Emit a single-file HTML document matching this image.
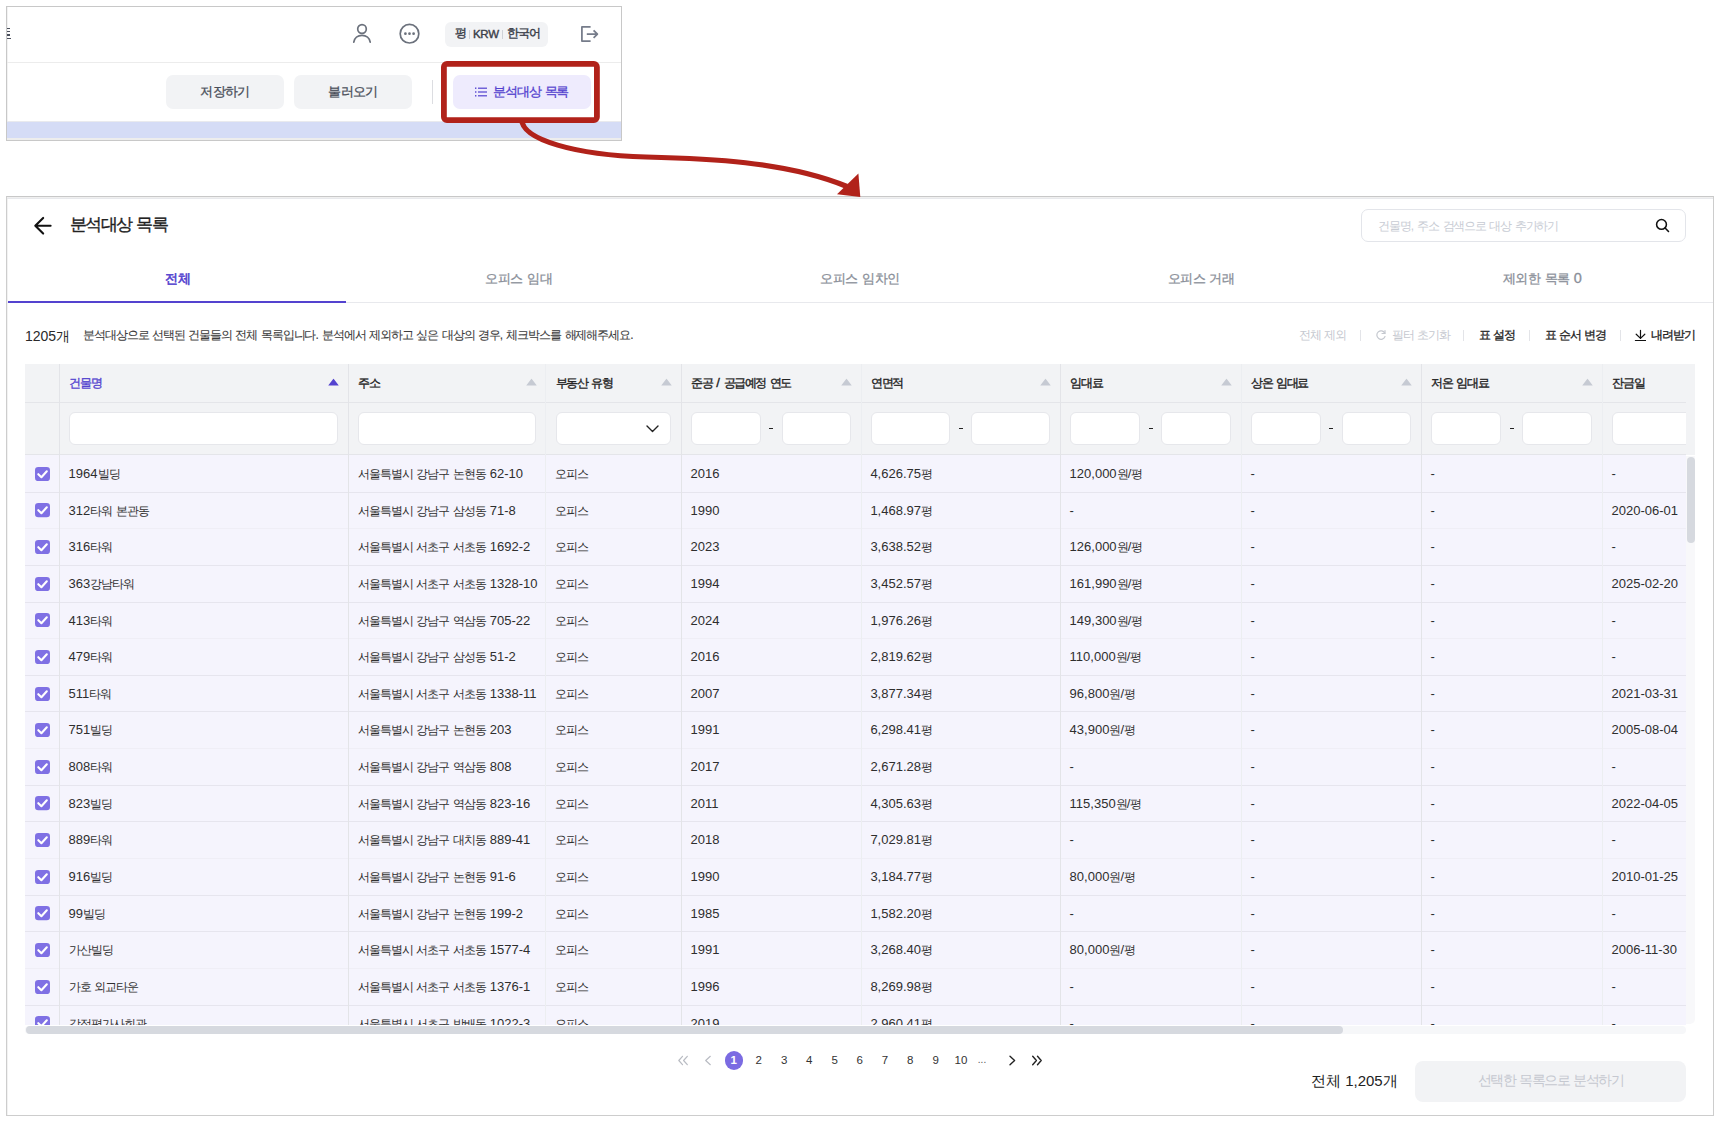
<!DOCTYPE html>
<html><head><meta charset="utf-8"><style>
*{box-sizing:border-box;margin:0;padding:0}
html,body{width:1720px;height:1124px;overflow:hidden;background:#fff}
body{position:relative;font-family:"Liberation Sans",sans-serif;color:#2a2a2a}
.abs{position:absolute}
.t{position:absolute;white-space:nowrap;line-height:1}
</style></head><body>

<div class="abs" style="left:6px;top:6px;width:616px;height:135px;border:1px solid #c8c8c8;background:#fff;overflow:hidden;box-shadow:inset 1px 0 0 #f2f2f2">
<div class="abs" style="left:0.00px;top:55.00px;width:614.00px;height:1.00px;background:#ececec;"></div>
<div class="abs" style="left:0.00px;top:21.00px;width:3.00px;height:1.40px;background:#4a4f5c;"></div>
<div class="abs" style="left:0.00px;top:24.00px;width:2.50px;height:1.20px;background:#4a4f5c;"></div>
<div class="abs" style="left:0.00px;top:27.00px;width:3.00px;height:1.80px;background:#4a4f5c;"></div>
<div class="abs" style="left:0.00px;top:31.00px;width:4.00px;height:1.40px;background:#4a4f5c;"></div>
<div class="abs" style="left:0.00px;top:114.00px;width:614.00px;height:1.00px;background:#e9eaee;"></div>
<div class="abs" style="left:0.00px;top:115.00px;width:614.00px;height:16.00px;background:#d5dcf6;"></div>
<div class="abs" style="left:0.00px;top:131.00px;width:614.00px;height:2.00px;background:#ededed;"></div>
</div>
<svg class="abs" style="left:350px;top:21px" width="24" height="24" viewBox="0 0 24 24" fill="none" stroke="#6b717c" stroke-width="1.7" stroke-linecap="round">
<circle cx="12" cy="8" r="4.3"/><path d="M3.8 21.2c0.6-4.2 4-6.8 8.2-6.8s7.6 2.6 8.2 6.8"/></svg>
<svg class="abs" style="left:397px;top:21px" width="25" height="25" viewBox="0 0 25 25" fill="none" stroke="#6b717c" stroke-width="1.7">
<circle cx="12.5" cy="12.7" r="9.3"/><circle cx="8.4" cy="12.7" r="1.35" fill="#6b717c" stroke="none"/><circle cx="12.5" cy="12.7" r="1.35" fill="#6b717c" stroke="none"/><circle cx="16.6" cy="12.7" r="1.35" fill="#6b717c" stroke="none"/></svg>
<div class="abs" style="left:445.00px;top:22.00px;width:103.00px;height:25.00px;background:#f2f3f5;border-radius:6px"></div>
<div class="t" style="left:454.50px;top:28.00px;font-size:11.5px;-webkit-text-stroke:0.4px #3b404a;color:#3b404a;"><span style="letter-spacing:-0.9px">평</span></div>
<div class="abs" style="left:469.00px;top:30.00px;width:1.00px;height:9.00px;background:#cfd2d8;"></div>
<div class="t" style="left:473.00px;top:28.50px;font-size:11.5px;-webkit-text-stroke:0.4px #3b404a;color:#3b404a;letter-spacing:-0.3px">KRW</div>
<div class="abs" style="left:502.00px;top:30.00px;width:1.00px;height:9.00px;background:#cfd2d8;"></div>
<div class="t" style="left:506.50px;top:28.00px;font-size:11.5px;-webkit-text-stroke:0.4px #3b404a;color:#3b404a;"><span style="letter-spacing:-0.9px">한국어</span></div>
<svg class="abs" style="left:578px;top:23px" width="24" height="22" viewBox="0 0 24 22" fill="none" stroke="#767c8a" stroke-width="1.75" stroke-linejoin="round">
<path d="M12.6 3.9H3.9V18.1H12.6"/><path d="M8.8 11.1H19.4M15.6 7.3l3.8 3.8-3.8 3.8"/></svg>
<div class="abs" style="left:166.00px;top:75.00px;width:118.00px;height:34.00px;background:#f2f3f5;border-radius:7px"></div>
<div class="t" style="left:166.00px;top:84.00px;font-size:14px;-webkit-text-stroke:0.3px #4a4f5a;color:#4a4f5a;width:118px;text-align:center"><span style="font-size:93.0%;letter-spacing:-0.7px">저장하기</span></div>
<div class="abs" style="left:294.00px;top:75.00px;width:118.00px;height:34.00px;background:#f2f3f5;border-radius:7px"></div>
<div class="t" style="left:294.00px;top:84.00px;font-size:14px;-webkit-text-stroke:0.3px #4a4f5a;color:#4a4f5a;width:118px;text-align:center"><span style="font-size:93.0%;letter-spacing:-0.7px">불러오기</span></div>
<div class="abs" style="left:432.00px;top:80.00px;width:1.00px;height:24.00px;background:#dcdde1;"></div>
<div class="abs" style="left:453.00px;top:75.00px;width:138.00px;height:34.00px;background:#eeebfd;border-radius:7px"></div>
<svg class="abs" style="left:474px;top:86px" width="14" height="12" viewBox="0 0 14 12" fill="#5443cf">
<rect x="1" y="1.5" width="1.4" height="1.4"/><rect x="1" y="5.3" width="1.4" height="1.4"/><rect x="1" y="9.1" width="1.4" height="1.4"/>
<rect x="4" y="1.6" width="9" height="1.2"/><rect x="4" y="5.4" width="9" height="1.2"/><rect x="4" y="9.2" width="9" height="1.2"/></svg>
<div class="t" style="left:493.00px;top:83.50px;font-size:14px;-webkit-text-stroke:0.3px #5443cf;color:#5443cf;"><span style="font-size:93.0%;letter-spacing:-1.1px">분석대상</span> <span style="font-size:93.0%;letter-spacing:-1.1px">목록</span></div>
<div class="abs" style="left:6px;top:196px;width:1708px;height:920px;border:1px solid #cdcdcd;border-top-color:#c8c8c8;box-shadow:inset 0 1px 0 #f0f0f0, inset 0 2px 0 #e8e9ec, inset 1px 0 0 #f2f2f2"></div>
<svg class="abs" style="left:32px;top:214px" width="22" height="22" viewBox="0 0 22 22" fill="none" stroke="#111" stroke-width="2.1" stroke-linecap="round" stroke-linejoin="round">
<path d="M4 11.75H18.6M11.15 3.9L3.3 11.75 11.15 19.6"/></svg>
<div class="t" style="left:70.00px;top:215.00px;font-size:18px;-webkit-text-stroke:0.35px #222;color:#222;"><span style="font-size:96.0%;letter-spacing:-1.7px">분석대상</span> <span style="font-size:96.0%;letter-spacing:-1.7px">목록</span></div>
<div class="abs" style="left:1361.00px;top:209.00px;width:325.00px;height:33.00px;background:#fff;border-radius:7px;border:1px solid #e3e5ea"></div>
<div class="t" style="left:1378.00px;top:219.50px;font-size:12px;color:#c8ccd4;"><span style="letter-spacing:-1.1px">건물명</span>, <span style="letter-spacing:-1.1px">주소</span> <span style="letter-spacing:-1.1px">검색으로</span> <span style="letter-spacing:-1.1px">대상</span> <span style="letter-spacing:-1.1px">추가하기</span></div>
<svg class="abs" style="left:1653px;top:217px" width="18" height="18" viewBox="0 0 18 18" fill="none" stroke="#111" stroke-width="1.55" stroke-linecap="round">
<circle cx="8.5" cy="7.4" r="4.9"/><path d="M12.1 11l3.4 3.5"/></svg>
<div class="t" style="left:7.00px;top:270.50px;font-size:14.5px;-webkit-text-stroke:0.6px #5443cf;color:#5443cf;width:341.20px;text-align:center"><span style="font-size:93.0%;letter-spacing:-0.45px">전체</span></div>
<div class="t" style="left:348.20px;top:270.50px;font-size:14.5px;-webkit-text-stroke:0.3px #8a8f99;color:#8a8f99;width:341.20px;text-align:center"><span style="font-size:93.0%;letter-spacing:-0.45px">오피스</span> <span style="font-size:93.0%;letter-spacing:-0.45px">임대</span></div>
<div class="t" style="left:689.40px;top:270.50px;font-size:14.5px;-webkit-text-stroke:0.3px #8a8f99;color:#8a8f99;width:341.20px;text-align:center"><span style="font-size:93.0%;letter-spacing:-0.45px">오피스</span> <span style="font-size:93.0%;letter-spacing:-0.45px">임차인</span></div>
<div class="t" style="left:1030.60px;top:270.50px;font-size:14.5px;-webkit-text-stroke:0.3px #8a8f99;color:#8a8f99;width:341.20px;text-align:center"><span style="font-size:93.0%;letter-spacing:-0.45px">오피스</span> <span style="font-size:93.0%;letter-spacing:-0.45px">거래</span></div>
<div class="t" style="left:1371.80px;top:270.50px;font-size:14.5px;-webkit-text-stroke:0.3px #8a8f99;color:#8a8f99;width:341.20px;text-align:center"><span style="font-size:93.0%;letter-spacing:-0.45px">제외한</span> <span style="font-size:93.0%;letter-spacing:-0.45px">목록</span> 0</div>
<div class="abs" style="left:7.00px;top:302.00px;width:1706.00px;height:1.00px;background:#e8e9ed;"></div>
<div class="abs" style="left:7.50px;top:301.00px;width:338.50px;height:2.00px;background:#5443cf;"></div>
<div class="t" style="left:25.00px;top:329.00px;font-size:14px;color:#2a2a2a;">1205개</div>
<div class="t" style="left:83.00px;top:329.30px;font-size:12px;-webkit-text-stroke:0.1px #3c3c3c;color:#3c3c3c;"><span style="letter-spacing:-1.05px">분석대상으로</span> <span style="letter-spacing:-1.05px">선택된</span> <span style="letter-spacing:-1.05px">건물들의</span> <span style="letter-spacing:-1.05px">전체</span> <span style="letter-spacing:-1.05px">목록입니다</span>. <span style="letter-spacing:-1.05px">분석에서</span> <span style="letter-spacing:-1.05px">제외하고</span> <span style="letter-spacing:-1.05px">싶은</span> <span style="letter-spacing:-1.05px">대상의</span> <span style="letter-spacing:-1.05px">경우</span>, <span style="letter-spacing:-1.05px">체크박스를</span> <span style="letter-spacing:-1.05px">해제해주세요</span>.</div>
<div class="t" style="left:1299.00px;top:329.00px;font-size:12px;color:#c5c8cf;"><span style="letter-spacing:-1.1px">전체</span> <span style="letter-spacing:-1.1px">제외</span></div>
<div class="abs" style="left:1360.00px;top:330.00px;width:1.00px;height:11.00px;background:#e3e4e8;"></div>
<svg class="abs" style="left:1375px;top:329px" width="12" height="12" viewBox="0 0 12 12" fill="none" stroke="#c5c8cf" stroke-width="1.2" stroke-linecap="round">
<path d="M9.8 4.2A4.2 4.2 0 1 0 10 7.5"/><path d="M10 1.5v3h-3" /></svg>
<div class="t" style="left:1392.00px;top:329.00px;font-size:12px;color:#c5c8cf;"><span style="letter-spacing:-1.1px">필터</span> <span style="letter-spacing:-1.1px">초기화</span></div>
<div class="abs" style="left:1463.00px;top:330.00px;width:1.00px;height:11.00px;background:#e3e4e8;"></div>
<div class="t" style="left:1479.00px;top:329.00px;font-size:12px;-webkit-text-stroke:0.3px #222;color:#222;"><span style="letter-spacing:-1.1px">표</span> <span style="letter-spacing:-1.1px">설정</span></div>
<div class="abs" style="left:1529.00px;top:330.00px;width:1.00px;height:11.00px;background:#e3e4e8;"></div>
<div class="t" style="left:1545.00px;top:329.00px;font-size:12px;-webkit-text-stroke:0.3px #222;color:#222;"><span style="letter-spacing:-1.1px">표</span> <span style="letter-spacing:-1.1px">순서</span> <span style="letter-spacing:-1.1px">변경</span></div>
<div class="abs" style="left:1620.00px;top:330.00px;width:1.00px;height:11.00px;background:#e3e4e8;"></div>
<svg class="abs" style="left:1634px;top:329px" width="12" height="13" viewBox="0 0 12 13" fill="none" stroke="#111" stroke-width="1.2" stroke-linecap="round" stroke-linejoin="round">
<path d="M6.5 1.3v8.2M2.2 5.2L6.5 9.4l4.3-4.2M1.4 11.5h10.2"/></svg>
<div class="t" style="left:1651.00px;top:329.00px;font-size:12px;-webkit-text-stroke:0.3px #222;color:#222;"><span style="letter-spacing:-1.1px">내려받기</span></div>
<div class="abs" style="left:25.00px;top:364.00px;width:1670.00px;height:90.50px;background:#f2f3f5;"></div>
<div class="abs" style="left:25px;top:364.0px;width:1661.0px;height:661.0px;overflow:hidden">
<div class="abs" style="left:0.00px;top:90.50px;width:1800.00px;height:700.00px;background:#f5f4fd;"></div>
<div class="abs" style="left:0.00px;top:37.90px;width:1800.00px;height:1.00px;background:#e4e5e9;"></div>
<div class="abs" style="left:0.00px;top:90.00px;width:1800.00px;height:1.00px;background:#e4e5e9;"></div>
<div class="abs" style="left:0.00px;top:127.64px;width:1800.00px;height:1.00px;background:#e6e5ee;"></div>
<div class="abs" style="left:0.00px;top:164.28px;width:1800.00px;height:1.00px;background:#efeef6;"></div>
<div class="abs" style="left:0.00px;top:200.92px;width:1800.00px;height:1.00px;background:#e6e5ee;"></div>
<div class="abs" style="left:0.00px;top:237.56px;width:1800.00px;height:1.00px;background:#e6e5ee;"></div>
<div class="abs" style="left:0.00px;top:274.20px;width:1800.00px;height:1.00px;background:#efeef6;"></div>
<div class="abs" style="left:0.00px;top:310.84px;width:1800.00px;height:1.00px;background:#e6e5ee;"></div>
<div class="abs" style="left:0.00px;top:347.48px;width:1800.00px;height:1.00px;background:#e6e5ee;"></div>
<div class="abs" style="left:0.00px;top:384.12px;width:1800.00px;height:1.00px;background:#efeef6;"></div>
<div class="abs" style="left:0.00px;top:420.76px;width:1800.00px;height:1.00px;background:#e6e5ee;"></div>
<div class="abs" style="left:0.00px;top:457.40px;width:1800.00px;height:1.00px;background:#e6e5ee;"></div>
<div class="abs" style="left:0.00px;top:494.04px;width:1800.00px;height:1.00px;background:#efeef6;"></div>
<div class="abs" style="left:0.00px;top:530.68px;width:1800.00px;height:1.00px;background:#e6e5ee;"></div>
<div class="abs" style="left:0.00px;top:567.32px;width:1800.00px;height:1.00px;background:#e6e5ee;"></div>
<div class="abs" style="left:0.00px;top:603.96px;width:1800.00px;height:1.00px;background:#efeef6;"></div>
<div class="abs" style="left:0.00px;top:640.60px;width:1800.00px;height:1.00px;background:#e6e5ee;"></div>
<div class="abs" style="left:0.00px;top:677.24px;width:1800.00px;height:1.00px;background:#e6e5ee;"></div>
<div class="abs" style="left:33.90px;top:0.00px;width:1.00px;height:700.00px;background:#e3e4e8;"></div>
<div class="abs" style="left:322.80px;top:0.00px;width:1.00px;height:700.00px;background:#e3e4e8;"></div>
<div class="abs" style="left:520.30px;top:0.00px;width:1.00px;height:700.00px;background:#eceef1;"></div>
<div class="abs" style="left:655.90px;top:0.00px;width:1.00px;height:700.00px;background:#e3e4e8;"></div>
<div class="abs" style="left:835.70px;top:0.00px;width:1.00px;height:700.00px;background:#eceef1;"></div>
<div class="abs" style="left:1034.90px;top:0.00px;width:1.00px;height:700.00px;background:#e3e4e8;"></div>
<div class="abs" style="left:1215.70px;top:0.00px;width:1.00px;height:700.00px;background:#eceef1;"></div>
<div class="abs" style="left:1395.90px;top:0.00px;width:1.00px;height:700.00px;background:#e3e4e8;"></div>
<div class="abs" style="left:1576.80px;top:0.00px;width:1.00px;height:700.00px;background:#eceef1;"></div>
<div class="t" style="left:44.40px;top:12.00px;font-size:13px;-webkit-text-stroke:0.35px #5443cf;color:#5443cf;"><span style="font-size:92.0%;letter-spacing:-1.36px">건물명</span></div>
<svg class="abs" style="left:303.30px;top:14px" width="11" height="8" viewBox="0 0 11 8"><path d="M5.5 0.8Q5.5 0.5 5.8 0.9L10.6 7.2Q10.8 7.5 10.4 7.5H0.6Q0.2 7.5 0.4 7.2L5.2 0.9Q5.5 0.5 5.5 0.8z" fill="#5443cf"/></svg>
<div class="abs" style="left:44.40px;top:48.40px;width:268.90px;height:32.50px;background:#fff;border-radius:6px;border:1px solid #e6e7eb"></div>
<div class="t" style="left:333.30px;top:12.00px;font-size:13px;-webkit-text-stroke:0.35px #222;color:#222;"><span style="font-size:92.0%;letter-spacing:-1.36px">주소</span></div>
<svg class="abs" style="left:500.80px;top:14px" width="11" height="8" viewBox="0 0 11 8"><path d="M5.5 0.8Q5.5 0.5 5.8 0.9L10.6 7.2Q10.8 7.5 10.4 7.5H0.6Q0.2 7.5 0.4 7.2L5.2 0.9Q5.5 0.5 5.5 0.8z" fill="#c6cad3"/></svg>
<div class="abs" style="left:333.30px;top:48.40px;width:177.50px;height:32.50px;background:#fff;border-radius:6px;border:1px solid #e6e7eb"></div>
<div class="t" style="left:530.80px;top:12.00px;font-size:13px;-webkit-text-stroke:0.35px #222;color:#222;"><span style="font-size:92.0%;letter-spacing:-1.36px">부동산</span> <span style="font-size:92.0%;letter-spacing:-1.36px">유형</span></div>
<svg class="abs" style="left:636.40px;top:14px" width="11" height="8" viewBox="0 0 11 8"><path d="M5.5 0.8Q5.5 0.5 5.8 0.9L10.6 7.2Q10.8 7.5 10.4 7.5H0.6Q0.2 7.5 0.4 7.2L5.2 0.9Q5.5 0.5 5.5 0.8z" fill="#c6cad3"/></svg>
<div class="abs" style="left:530.80px;top:48.40px;width:115.60px;height:32.50px;background:#fff;border-radius:6px;border:1px solid #e6e7eb"></div>
<svg class="abs" style="left:620.90px;top:61.40px" width="13" height="8" viewBox="0 0 13 8" fill="none" stroke="#222" stroke-width="1.4" stroke-linecap="round" stroke-linejoin="round"><path d="M1 1l5.5 5.5L12 1"/></svg>
<div class="t" style="left:666.40px;top:12.00px;font-size:13px;-webkit-text-stroke:0.35px #222;color:#222;"><span style="font-size:92.0%;letter-spacing:-1.36px">준공</span> / <span style="font-size:92.0%;letter-spacing:-1.36px">공급예정</span> <span style="font-size:92.0%;letter-spacing:-1.36px">연도</span></div>
<svg class="abs" style="left:816.20px;top:14px" width="11" height="8" viewBox="0 0 11 8"><path d="M5.5 0.8Q5.5 0.5 5.8 0.9L10.6 7.2Q10.8 7.5 10.4 7.5H0.6Q0.2 7.5 0.4 7.2L5.2 0.9Q5.5 0.5 5.5 0.8z" fill="#c6cad3"/></svg>
<div class="abs" style="left:666.40px;top:48.40px;width:69.40px;height:32.50px;background:#fff;border-radius:6px;border:1px solid #e6e7eb"></div>
<div class="abs" style="left:744.30px;top:63.90px;width:4.00px;height:1.60px;background:#222;"></div>
<div class="abs" style="left:756.80px;top:48.40px;width:69.40px;height:32.50px;background:#fff;border-radius:6px;border:1px solid #e6e7eb"></div>
<div class="t" style="left:846.20px;top:12.00px;font-size:13px;-webkit-text-stroke:0.35px #222;color:#222;"><span style="font-size:92.0%;letter-spacing:-1.36px">연면적</span></div>
<svg class="abs" style="left:1015.40px;top:14px" width="11" height="8" viewBox="0 0 11 8"><path d="M5.5 0.8Q5.5 0.5 5.8 0.9L10.6 7.2Q10.8 7.5 10.4 7.5H0.6Q0.2 7.5 0.4 7.2L5.2 0.9Q5.5 0.5 5.5 0.8z" fill="#c6cad3"/></svg>
<div class="abs" style="left:846.20px;top:48.40px;width:79.10px;height:32.50px;background:#fff;border-radius:6px;border:1px solid #e6e7eb"></div>
<div class="abs" style="left:933.80px;top:63.90px;width:4.00px;height:1.60px;background:#222;"></div>
<div class="abs" style="left:946.30px;top:48.40px;width:79.10px;height:32.50px;background:#fff;border-radius:6px;border:1px solid #e6e7eb"></div>
<div class="t" style="left:1045.40px;top:12.00px;font-size:13px;-webkit-text-stroke:0.35px #222;color:#222;"><span style="font-size:92.0%;letter-spacing:-1.36px">임대료</span></div>
<svg class="abs" style="left:1196.20px;top:14px" width="11" height="8" viewBox="0 0 11 8"><path d="M5.5 0.8Q5.5 0.5 5.8 0.9L10.6 7.2Q10.8 7.5 10.4 7.5H0.6Q0.2 7.5 0.4 7.2L5.2 0.9Q5.5 0.5 5.5 0.8z" fill="#c6cad3"/></svg>
<div class="abs" style="left:1045.40px;top:48.40px;width:69.90px;height:32.50px;background:#fff;border-radius:6px;border:1px solid #e6e7eb"></div>
<div class="abs" style="left:1123.80px;top:63.90px;width:4.00px;height:1.60px;background:#222;"></div>
<div class="abs" style="left:1136.30px;top:48.40px;width:69.90px;height:32.50px;background:#fff;border-radius:6px;border:1px solid #e6e7eb"></div>
<div class="t" style="left:1226.20px;top:12.00px;font-size:13px;-webkit-text-stroke:0.35px #222;color:#222;"><span style="font-size:92.0%;letter-spacing:-1.36px">상온</span> <span style="font-size:92.0%;letter-spacing:-1.36px">임대료</span></div>
<svg class="abs" style="left:1376.40px;top:14px" width="11" height="8" viewBox="0 0 11 8"><path d="M5.5 0.8Q5.5 0.5 5.8 0.9L10.6 7.2Q10.8 7.5 10.4 7.5H0.6Q0.2 7.5 0.4 7.2L5.2 0.9Q5.5 0.5 5.5 0.8z" fill="#c6cad3"/></svg>
<div class="abs" style="left:1226.20px;top:48.40px;width:69.60px;height:32.50px;background:#fff;border-radius:6px;border:1px solid #e6e7eb"></div>
<div class="abs" style="left:1304.30px;top:63.90px;width:4.00px;height:1.60px;background:#222;"></div>
<div class="abs" style="left:1316.80px;top:48.40px;width:69.60px;height:32.50px;background:#fff;border-radius:6px;border:1px solid #e6e7eb"></div>
<div class="t" style="left:1406.40px;top:12.00px;font-size:13px;-webkit-text-stroke:0.35px #222;color:#222;"><span style="font-size:92.0%;letter-spacing:-1.36px">저온</span> <span style="font-size:92.0%;letter-spacing:-1.36px">임대료</span></div>
<svg class="abs" style="left:1557.30px;top:14px" width="11" height="8" viewBox="0 0 11 8"><path d="M5.5 0.8Q5.5 0.5 5.8 0.9L10.6 7.2Q10.8 7.5 10.4 7.5H0.6Q0.2 7.5 0.4 7.2L5.2 0.9Q5.5 0.5 5.5 0.8z" fill="#c6cad3"/></svg>
<div class="abs" style="left:1406.40px;top:48.40px;width:69.95px;height:32.50px;background:#fff;border-radius:6px;border:1px solid #e6e7eb"></div>
<div class="abs" style="left:1484.85px;top:63.90px;width:4.00px;height:1.60px;background:#222;"></div>
<div class="abs" style="left:1497.35px;top:48.40px;width:69.95px;height:32.50px;background:#fff;border-radius:6px;border:1px solid #e6e7eb"></div>
<div class="t" style="left:1587.30px;top:12.00px;font-size:13px;-webkit-text-stroke:0.35px #222;color:#222;"><span style="font-size:92.0%;letter-spacing:-1.36px">잔금일</span></div>
<div class="abs" style="left:1587.30px;top:48.40px;width:200.00px;height:32.50px;background:#fff;border-radius:6px;border:1px solid #e6e7eb"></div>
<svg class="abs" style="left:10px;top:102.70px" width="15" height="14.2" viewBox="0 0 15 14.2"><rect width="15" height="14.2" rx="3.3" fill="#7f70e4"/><path d="M3.3 7.2l3.1 3 5.4-5.9" fill="none" stroke="#fff" stroke-width="2.1" stroke-linecap="round" stroke-linejoin="round"/></svg>
<div class="t" style="left:43.60px;top:103.00px;font-size:13px;color:#2e2e2e;">1964<span style="font-size:92.0%;letter-spacing:-0.96px">빌딩</span></div>
<div class="t" style="left:332.50px;top:103.00px;font-size:13px;color:#2e2e2e;"><span style="font-size:92.0%;letter-spacing:-0.96px">서울특별시</span> <span style="font-size:92.0%;letter-spacing:-0.96px">강남구</span> <span style="font-size:92.0%;letter-spacing:-0.96px">논현동</span> 62-10</div>
<div class="t" style="left:530.00px;top:103.00px;font-size:13px;color:#2e2e2e;"><span style="font-size:92.0%;letter-spacing:-0.96px">오피스</span></div>
<div class="t" style="left:665.60px;top:103.00px;font-size:13px;color:#2e2e2e;">2016</div>
<div class="t" style="left:845.40px;top:103.00px;font-size:13px;color:#2e2e2e;">4,626.75<span style="font-size:92.0%;letter-spacing:-0.96px">평</span></div>
<div class="t" style="left:1044.60px;top:103.00px;font-size:13px;color:#2e2e2e;">120,000<span style="font-size:92.0%;letter-spacing:-0.96px">원</span>/<span style="font-size:92.0%;letter-spacing:-0.96px">평</span></div>
<div class="t" style="left:1225.40px;top:103.00px;font-size:13px;color:#2e2e2e;">-</div>
<div class="t" style="left:1405.60px;top:103.00px;font-size:13px;color:#2e2e2e;">-</div>
<div class="t" style="left:1586.50px;top:103.00px;font-size:13px;color:#2e2e2e;">-</div>
<svg class="abs" style="left:10px;top:139.34px" width="15" height="14.2" viewBox="0 0 15 14.2"><rect width="15" height="14.2" rx="3.3" fill="#7f70e4"/><path d="M3.3 7.2l3.1 3 5.4-5.9" fill="none" stroke="#fff" stroke-width="2.1" stroke-linecap="round" stroke-linejoin="round"/></svg>
<div class="t" style="left:43.60px;top:139.64px;font-size:13px;color:#2e2e2e;">312<span style="font-size:92.0%;letter-spacing:-0.96px">타워</span> <span style="font-size:92.0%;letter-spacing:-0.96px">본관동</span></div>
<div class="t" style="left:332.50px;top:139.64px;font-size:13px;color:#2e2e2e;"><span style="font-size:92.0%;letter-spacing:-0.96px">서울특별시</span> <span style="font-size:92.0%;letter-spacing:-0.96px">강남구</span> <span style="font-size:92.0%;letter-spacing:-0.96px">삼성동</span> 71-8</div>
<div class="t" style="left:530.00px;top:139.64px;font-size:13px;color:#2e2e2e;"><span style="font-size:92.0%;letter-spacing:-0.96px">오피스</span></div>
<div class="t" style="left:665.60px;top:139.64px;font-size:13px;color:#2e2e2e;">1990</div>
<div class="t" style="left:845.40px;top:139.64px;font-size:13px;color:#2e2e2e;">1,468.97<span style="font-size:92.0%;letter-spacing:-0.96px">평</span></div>
<div class="t" style="left:1044.60px;top:139.64px;font-size:13px;color:#2e2e2e;">-</div>
<div class="t" style="left:1225.40px;top:139.64px;font-size:13px;color:#2e2e2e;">-</div>
<div class="t" style="left:1405.60px;top:139.64px;font-size:13px;color:#2e2e2e;">-</div>
<div class="t" style="left:1586.50px;top:139.64px;font-size:13px;color:#2e2e2e;">2020-06-01</div>
<svg class="abs" style="left:10px;top:175.98px" width="15" height="14.2" viewBox="0 0 15 14.2"><rect width="15" height="14.2" rx="3.3" fill="#7f70e4"/><path d="M3.3 7.2l3.1 3 5.4-5.9" fill="none" stroke="#fff" stroke-width="2.1" stroke-linecap="round" stroke-linejoin="round"/></svg>
<div class="t" style="left:43.60px;top:176.28px;font-size:13px;color:#2e2e2e;">316<span style="font-size:92.0%;letter-spacing:-0.96px">타워</span></div>
<div class="t" style="left:332.50px;top:176.28px;font-size:13px;color:#2e2e2e;"><span style="font-size:92.0%;letter-spacing:-0.96px">서울특별시</span> <span style="font-size:92.0%;letter-spacing:-0.96px">서초구</span> <span style="font-size:92.0%;letter-spacing:-0.96px">서초동</span> 1692-2</div>
<div class="t" style="left:530.00px;top:176.28px;font-size:13px;color:#2e2e2e;"><span style="font-size:92.0%;letter-spacing:-0.96px">오피스</span></div>
<div class="t" style="left:665.60px;top:176.28px;font-size:13px;color:#2e2e2e;">2023</div>
<div class="t" style="left:845.40px;top:176.28px;font-size:13px;color:#2e2e2e;">3,638.52<span style="font-size:92.0%;letter-spacing:-0.96px">평</span></div>
<div class="t" style="left:1044.60px;top:176.28px;font-size:13px;color:#2e2e2e;">126,000<span style="font-size:92.0%;letter-spacing:-0.96px">원</span>/<span style="font-size:92.0%;letter-spacing:-0.96px">평</span></div>
<div class="t" style="left:1225.40px;top:176.28px;font-size:13px;color:#2e2e2e;">-</div>
<div class="t" style="left:1405.60px;top:176.28px;font-size:13px;color:#2e2e2e;">-</div>
<div class="t" style="left:1586.50px;top:176.28px;font-size:13px;color:#2e2e2e;">-</div>
<svg class="abs" style="left:10px;top:212.62px" width="15" height="14.2" viewBox="0 0 15 14.2"><rect width="15" height="14.2" rx="3.3" fill="#7f70e4"/><path d="M3.3 7.2l3.1 3 5.4-5.9" fill="none" stroke="#fff" stroke-width="2.1" stroke-linecap="round" stroke-linejoin="round"/></svg>
<div class="t" style="left:43.60px;top:212.92px;font-size:13px;color:#2e2e2e;">363<span style="font-size:92.0%;letter-spacing:-0.96px">강남타워</span></div>
<div class="t" style="left:332.50px;top:212.92px;font-size:13px;color:#2e2e2e;"><span style="font-size:92.0%;letter-spacing:-0.96px">서울특별시</span> <span style="font-size:92.0%;letter-spacing:-0.96px">서초구</span> <span style="font-size:92.0%;letter-spacing:-0.96px">서초동</span> 1328-10</div>
<div class="t" style="left:530.00px;top:212.92px;font-size:13px;color:#2e2e2e;"><span style="font-size:92.0%;letter-spacing:-0.96px">오피스</span></div>
<div class="t" style="left:665.60px;top:212.92px;font-size:13px;color:#2e2e2e;">1994</div>
<div class="t" style="left:845.40px;top:212.92px;font-size:13px;color:#2e2e2e;">3,452.57<span style="font-size:92.0%;letter-spacing:-0.96px">평</span></div>
<div class="t" style="left:1044.60px;top:212.92px;font-size:13px;color:#2e2e2e;">161,990<span style="font-size:92.0%;letter-spacing:-0.96px">원</span>/<span style="font-size:92.0%;letter-spacing:-0.96px">평</span></div>
<div class="t" style="left:1225.40px;top:212.92px;font-size:13px;color:#2e2e2e;">-</div>
<div class="t" style="left:1405.60px;top:212.92px;font-size:13px;color:#2e2e2e;">-</div>
<div class="t" style="left:1586.50px;top:212.92px;font-size:13px;color:#2e2e2e;">2025-02-20</div>
<svg class="abs" style="left:10px;top:249.26px" width="15" height="14.2" viewBox="0 0 15 14.2"><rect width="15" height="14.2" rx="3.3" fill="#7f70e4"/><path d="M3.3 7.2l3.1 3 5.4-5.9" fill="none" stroke="#fff" stroke-width="2.1" stroke-linecap="round" stroke-linejoin="round"/></svg>
<div class="t" style="left:43.60px;top:249.56px;font-size:13px;color:#2e2e2e;">413<span style="font-size:92.0%;letter-spacing:-0.96px">타워</span></div>
<div class="t" style="left:332.50px;top:249.56px;font-size:13px;color:#2e2e2e;"><span style="font-size:92.0%;letter-spacing:-0.96px">서울특별시</span> <span style="font-size:92.0%;letter-spacing:-0.96px">강남구</span> <span style="font-size:92.0%;letter-spacing:-0.96px">역삼동</span> 705-22</div>
<div class="t" style="left:530.00px;top:249.56px;font-size:13px;color:#2e2e2e;"><span style="font-size:92.0%;letter-spacing:-0.96px">오피스</span></div>
<div class="t" style="left:665.60px;top:249.56px;font-size:13px;color:#2e2e2e;">2024</div>
<div class="t" style="left:845.40px;top:249.56px;font-size:13px;color:#2e2e2e;">1,976.26<span style="font-size:92.0%;letter-spacing:-0.96px">평</span></div>
<div class="t" style="left:1044.60px;top:249.56px;font-size:13px;color:#2e2e2e;">149,300<span style="font-size:92.0%;letter-spacing:-0.96px">원</span>/<span style="font-size:92.0%;letter-spacing:-0.96px">평</span></div>
<div class="t" style="left:1225.40px;top:249.56px;font-size:13px;color:#2e2e2e;">-</div>
<div class="t" style="left:1405.60px;top:249.56px;font-size:13px;color:#2e2e2e;">-</div>
<div class="t" style="left:1586.50px;top:249.56px;font-size:13px;color:#2e2e2e;">-</div>
<svg class="abs" style="left:10px;top:285.90px" width="15" height="14.2" viewBox="0 0 15 14.2"><rect width="15" height="14.2" rx="3.3" fill="#7f70e4"/><path d="M3.3 7.2l3.1 3 5.4-5.9" fill="none" stroke="#fff" stroke-width="2.1" stroke-linecap="round" stroke-linejoin="round"/></svg>
<div class="t" style="left:43.60px;top:286.20px;font-size:13px;color:#2e2e2e;">479<span style="font-size:92.0%;letter-spacing:-0.96px">타워</span></div>
<div class="t" style="left:332.50px;top:286.20px;font-size:13px;color:#2e2e2e;"><span style="font-size:92.0%;letter-spacing:-0.96px">서울특별시</span> <span style="font-size:92.0%;letter-spacing:-0.96px">강남구</span> <span style="font-size:92.0%;letter-spacing:-0.96px">삼성동</span> 51-2</div>
<div class="t" style="left:530.00px;top:286.20px;font-size:13px;color:#2e2e2e;"><span style="font-size:92.0%;letter-spacing:-0.96px">오피스</span></div>
<div class="t" style="left:665.60px;top:286.20px;font-size:13px;color:#2e2e2e;">2016</div>
<div class="t" style="left:845.40px;top:286.20px;font-size:13px;color:#2e2e2e;">2,819.62<span style="font-size:92.0%;letter-spacing:-0.96px">평</span></div>
<div class="t" style="left:1044.60px;top:286.20px;font-size:13px;color:#2e2e2e;">110,000<span style="font-size:92.0%;letter-spacing:-0.96px">원</span>/<span style="font-size:92.0%;letter-spacing:-0.96px">평</span></div>
<div class="t" style="left:1225.40px;top:286.20px;font-size:13px;color:#2e2e2e;">-</div>
<div class="t" style="left:1405.60px;top:286.20px;font-size:13px;color:#2e2e2e;">-</div>
<div class="t" style="left:1586.50px;top:286.20px;font-size:13px;color:#2e2e2e;">-</div>
<svg class="abs" style="left:10px;top:322.54px" width="15" height="14.2" viewBox="0 0 15 14.2"><rect width="15" height="14.2" rx="3.3" fill="#7f70e4"/><path d="M3.3 7.2l3.1 3 5.4-5.9" fill="none" stroke="#fff" stroke-width="2.1" stroke-linecap="round" stroke-linejoin="round"/></svg>
<div class="t" style="left:43.60px;top:322.84px;font-size:13px;color:#2e2e2e;">511<span style="font-size:92.0%;letter-spacing:-0.96px">타워</span></div>
<div class="t" style="left:332.50px;top:322.84px;font-size:13px;color:#2e2e2e;"><span style="font-size:92.0%;letter-spacing:-0.96px">서울특별시</span> <span style="font-size:92.0%;letter-spacing:-0.96px">서초구</span> <span style="font-size:92.0%;letter-spacing:-0.96px">서초동</span> 1338-11</div>
<div class="t" style="left:530.00px;top:322.84px;font-size:13px;color:#2e2e2e;"><span style="font-size:92.0%;letter-spacing:-0.96px">오피스</span></div>
<div class="t" style="left:665.60px;top:322.84px;font-size:13px;color:#2e2e2e;">2007</div>
<div class="t" style="left:845.40px;top:322.84px;font-size:13px;color:#2e2e2e;">3,877.34<span style="font-size:92.0%;letter-spacing:-0.96px">평</span></div>
<div class="t" style="left:1044.60px;top:322.84px;font-size:13px;color:#2e2e2e;">96,800<span style="font-size:92.0%;letter-spacing:-0.96px">원</span>/<span style="font-size:92.0%;letter-spacing:-0.96px">평</span></div>
<div class="t" style="left:1225.40px;top:322.84px;font-size:13px;color:#2e2e2e;">-</div>
<div class="t" style="left:1405.60px;top:322.84px;font-size:13px;color:#2e2e2e;">-</div>
<div class="t" style="left:1586.50px;top:322.84px;font-size:13px;color:#2e2e2e;">2021-03-31</div>
<svg class="abs" style="left:10px;top:359.18px" width="15" height="14.2" viewBox="0 0 15 14.2"><rect width="15" height="14.2" rx="3.3" fill="#7f70e4"/><path d="M3.3 7.2l3.1 3 5.4-5.9" fill="none" stroke="#fff" stroke-width="2.1" stroke-linecap="round" stroke-linejoin="round"/></svg>
<div class="t" style="left:43.60px;top:359.48px;font-size:13px;color:#2e2e2e;">751<span style="font-size:92.0%;letter-spacing:-0.96px">빌딩</span></div>
<div class="t" style="left:332.50px;top:359.48px;font-size:13px;color:#2e2e2e;"><span style="font-size:92.0%;letter-spacing:-0.96px">서울특별시</span> <span style="font-size:92.0%;letter-spacing:-0.96px">강남구</span> <span style="font-size:92.0%;letter-spacing:-0.96px">논현동</span> 203</div>
<div class="t" style="left:530.00px;top:359.48px;font-size:13px;color:#2e2e2e;"><span style="font-size:92.0%;letter-spacing:-0.96px">오피스</span></div>
<div class="t" style="left:665.60px;top:359.48px;font-size:13px;color:#2e2e2e;">1991</div>
<div class="t" style="left:845.40px;top:359.48px;font-size:13px;color:#2e2e2e;">6,298.41<span style="font-size:92.0%;letter-spacing:-0.96px">평</span></div>
<div class="t" style="left:1044.60px;top:359.48px;font-size:13px;color:#2e2e2e;">43,900<span style="font-size:92.0%;letter-spacing:-0.96px">원</span>/<span style="font-size:92.0%;letter-spacing:-0.96px">평</span></div>
<div class="t" style="left:1225.40px;top:359.48px;font-size:13px;color:#2e2e2e;">-</div>
<div class="t" style="left:1405.60px;top:359.48px;font-size:13px;color:#2e2e2e;">-</div>
<div class="t" style="left:1586.50px;top:359.48px;font-size:13px;color:#2e2e2e;">2005-08-04</div>
<svg class="abs" style="left:10px;top:395.82px" width="15" height="14.2" viewBox="0 0 15 14.2"><rect width="15" height="14.2" rx="3.3" fill="#7f70e4"/><path d="M3.3 7.2l3.1 3 5.4-5.9" fill="none" stroke="#fff" stroke-width="2.1" stroke-linecap="round" stroke-linejoin="round"/></svg>
<div class="t" style="left:43.60px;top:396.12px;font-size:13px;color:#2e2e2e;">808<span style="font-size:92.0%;letter-spacing:-0.96px">타워</span></div>
<div class="t" style="left:332.50px;top:396.12px;font-size:13px;color:#2e2e2e;"><span style="font-size:92.0%;letter-spacing:-0.96px">서울특별시</span> <span style="font-size:92.0%;letter-spacing:-0.96px">강남구</span> <span style="font-size:92.0%;letter-spacing:-0.96px">역삼동</span> 808</div>
<div class="t" style="left:530.00px;top:396.12px;font-size:13px;color:#2e2e2e;"><span style="font-size:92.0%;letter-spacing:-0.96px">오피스</span></div>
<div class="t" style="left:665.60px;top:396.12px;font-size:13px;color:#2e2e2e;">2017</div>
<div class="t" style="left:845.40px;top:396.12px;font-size:13px;color:#2e2e2e;">2,671.28<span style="font-size:92.0%;letter-spacing:-0.96px">평</span></div>
<div class="t" style="left:1044.60px;top:396.12px;font-size:13px;color:#2e2e2e;">-</div>
<div class="t" style="left:1225.40px;top:396.12px;font-size:13px;color:#2e2e2e;">-</div>
<div class="t" style="left:1405.60px;top:396.12px;font-size:13px;color:#2e2e2e;">-</div>
<div class="t" style="left:1586.50px;top:396.12px;font-size:13px;color:#2e2e2e;">-</div>
<svg class="abs" style="left:10px;top:432.46px" width="15" height="14.2" viewBox="0 0 15 14.2"><rect width="15" height="14.2" rx="3.3" fill="#7f70e4"/><path d="M3.3 7.2l3.1 3 5.4-5.9" fill="none" stroke="#fff" stroke-width="2.1" stroke-linecap="round" stroke-linejoin="round"/></svg>
<div class="t" style="left:43.60px;top:432.76px;font-size:13px;color:#2e2e2e;">823<span style="font-size:92.0%;letter-spacing:-0.96px">빌딩</span></div>
<div class="t" style="left:332.50px;top:432.76px;font-size:13px;color:#2e2e2e;"><span style="font-size:92.0%;letter-spacing:-0.96px">서울특별시</span> <span style="font-size:92.0%;letter-spacing:-0.96px">강남구</span> <span style="font-size:92.0%;letter-spacing:-0.96px">역삼동</span> 823-16</div>
<div class="t" style="left:530.00px;top:432.76px;font-size:13px;color:#2e2e2e;"><span style="font-size:92.0%;letter-spacing:-0.96px">오피스</span></div>
<div class="t" style="left:665.60px;top:432.76px;font-size:13px;color:#2e2e2e;">2011</div>
<div class="t" style="left:845.40px;top:432.76px;font-size:13px;color:#2e2e2e;">4,305.63<span style="font-size:92.0%;letter-spacing:-0.96px">평</span></div>
<div class="t" style="left:1044.60px;top:432.76px;font-size:13px;color:#2e2e2e;">115,350<span style="font-size:92.0%;letter-spacing:-0.96px">원</span>/<span style="font-size:92.0%;letter-spacing:-0.96px">평</span></div>
<div class="t" style="left:1225.40px;top:432.76px;font-size:13px;color:#2e2e2e;">-</div>
<div class="t" style="left:1405.60px;top:432.76px;font-size:13px;color:#2e2e2e;">-</div>
<div class="t" style="left:1586.50px;top:432.76px;font-size:13px;color:#2e2e2e;">2022-04-05</div>
<svg class="abs" style="left:10px;top:469.10px" width="15" height="14.2" viewBox="0 0 15 14.2"><rect width="15" height="14.2" rx="3.3" fill="#7f70e4"/><path d="M3.3 7.2l3.1 3 5.4-5.9" fill="none" stroke="#fff" stroke-width="2.1" stroke-linecap="round" stroke-linejoin="round"/></svg>
<div class="t" style="left:43.60px;top:469.40px;font-size:13px;color:#2e2e2e;">889<span style="font-size:92.0%;letter-spacing:-0.96px">타워</span></div>
<div class="t" style="left:332.50px;top:469.40px;font-size:13px;color:#2e2e2e;"><span style="font-size:92.0%;letter-spacing:-0.96px">서울특별시</span> <span style="font-size:92.0%;letter-spacing:-0.96px">강남구</span> <span style="font-size:92.0%;letter-spacing:-0.96px">대치동</span> 889-41</div>
<div class="t" style="left:530.00px;top:469.40px;font-size:13px;color:#2e2e2e;"><span style="font-size:92.0%;letter-spacing:-0.96px">오피스</span></div>
<div class="t" style="left:665.60px;top:469.40px;font-size:13px;color:#2e2e2e;">2018</div>
<div class="t" style="left:845.40px;top:469.40px;font-size:13px;color:#2e2e2e;">7,029.81<span style="font-size:92.0%;letter-spacing:-0.96px">평</span></div>
<div class="t" style="left:1044.60px;top:469.40px;font-size:13px;color:#2e2e2e;">-</div>
<div class="t" style="left:1225.40px;top:469.40px;font-size:13px;color:#2e2e2e;">-</div>
<div class="t" style="left:1405.60px;top:469.40px;font-size:13px;color:#2e2e2e;">-</div>
<div class="t" style="left:1586.50px;top:469.40px;font-size:13px;color:#2e2e2e;">-</div>
<svg class="abs" style="left:10px;top:505.74px" width="15" height="14.2" viewBox="0 0 15 14.2"><rect width="15" height="14.2" rx="3.3" fill="#7f70e4"/><path d="M3.3 7.2l3.1 3 5.4-5.9" fill="none" stroke="#fff" stroke-width="2.1" stroke-linecap="round" stroke-linejoin="round"/></svg>
<div class="t" style="left:43.60px;top:506.04px;font-size:13px;color:#2e2e2e;">916<span style="font-size:92.0%;letter-spacing:-0.96px">빌딩</span></div>
<div class="t" style="left:332.50px;top:506.04px;font-size:13px;color:#2e2e2e;"><span style="font-size:92.0%;letter-spacing:-0.96px">서울특별시</span> <span style="font-size:92.0%;letter-spacing:-0.96px">강남구</span> <span style="font-size:92.0%;letter-spacing:-0.96px">논현동</span> 91-6</div>
<div class="t" style="left:530.00px;top:506.04px;font-size:13px;color:#2e2e2e;"><span style="font-size:92.0%;letter-spacing:-0.96px">오피스</span></div>
<div class="t" style="left:665.60px;top:506.04px;font-size:13px;color:#2e2e2e;">1990</div>
<div class="t" style="left:845.40px;top:506.04px;font-size:13px;color:#2e2e2e;">3,184.77<span style="font-size:92.0%;letter-spacing:-0.96px">평</span></div>
<div class="t" style="left:1044.60px;top:506.04px;font-size:13px;color:#2e2e2e;">80,000<span style="font-size:92.0%;letter-spacing:-0.96px">원</span>/<span style="font-size:92.0%;letter-spacing:-0.96px">평</span></div>
<div class="t" style="left:1225.40px;top:506.04px;font-size:13px;color:#2e2e2e;">-</div>
<div class="t" style="left:1405.60px;top:506.04px;font-size:13px;color:#2e2e2e;">-</div>
<div class="t" style="left:1586.50px;top:506.04px;font-size:13px;color:#2e2e2e;">2010-01-25</div>
<svg class="abs" style="left:10px;top:542.38px" width="15" height="14.2" viewBox="0 0 15 14.2"><rect width="15" height="14.2" rx="3.3" fill="#7f70e4"/><path d="M3.3 7.2l3.1 3 5.4-5.9" fill="none" stroke="#fff" stroke-width="2.1" stroke-linecap="round" stroke-linejoin="round"/></svg>
<div class="t" style="left:43.60px;top:542.68px;font-size:13px;color:#2e2e2e;">99<span style="font-size:92.0%;letter-spacing:-0.96px">빌딩</span></div>
<div class="t" style="left:332.50px;top:542.68px;font-size:13px;color:#2e2e2e;"><span style="font-size:92.0%;letter-spacing:-0.96px">서울특별시</span> <span style="font-size:92.0%;letter-spacing:-0.96px">강남구</span> <span style="font-size:92.0%;letter-spacing:-0.96px">논현동</span> 199-2</div>
<div class="t" style="left:530.00px;top:542.68px;font-size:13px;color:#2e2e2e;"><span style="font-size:92.0%;letter-spacing:-0.96px">오피스</span></div>
<div class="t" style="left:665.60px;top:542.68px;font-size:13px;color:#2e2e2e;">1985</div>
<div class="t" style="left:845.40px;top:542.68px;font-size:13px;color:#2e2e2e;">1,582.20<span style="font-size:92.0%;letter-spacing:-0.96px">평</span></div>
<div class="t" style="left:1044.60px;top:542.68px;font-size:13px;color:#2e2e2e;">-</div>
<div class="t" style="left:1225.40px;top:542.68px;font-size:13px;color:#2e2e2e;">-</div>
<div class="t" style="left:1405.60px;top:542.68px;font-size:13px;color:#2e2e2e;">-</div>
<div class="t" style="left:1586.50px;top:542.68px;font-size:13px;color:#2e2e2e;">-</div>
<svg class="abs" style="left:10px;top:579.02px" width="15" height="14.2" viewBox="0 0 15 14.2"><rect width="15" height="14.2" rx="3.3" fill="#7f70e4"/><path d="M3.3 7.2l3.1 3 5.4-5.9" fill="none" stroke="#fff" stroke-width="2.1" stroke-linecap="round" stroke-linejoin="round"/></svg>
<div class="t" style="left:43.60px;top:579.32px;font-size:13px;color:#2e2e2e;"><span style="font-size:92.0%;letter-spacing:-0.96px">가산빌딩</span></div>
<div class="t" style="left:332.50px;top:579.32px;font-size:13px;color:#2e2e2e;"><span style="font-size:92.0%;letter-spacing:-0.96px">서울특별시</span> <span style="font-size:92.0%;letter-spacing:-0.96px">서초구</span> <span style="font-size:92.0%;letter-spacing:-0.96px">서초동</span> 1577-4</div>
<div class="t" style="left:530.00px;top:579.32px;font-size:13px;color:#2e2e2e;"><span style="font-size:92.0%;letter-spacing:-0.96px">오피스</span></div>
<div class="t" style="left:665.60px;top:579.32px;font-size:13px;color:#2e2e2e;">1991</div>
<div class="t" style="left:845.40px;top:579.32px;font-size:13px;color:#2e2e2e;">3,268.40<span style="font-size:92.0%;letter-spacing:-0.96px">평</span></div>
<div class="t" style="left:1044.60px;top:579.32px;font-size:13px;color:#2e2e2e;">80,000<span style="font-size:92.0%;letter-spacing:-0.96px">원</span>/<span style="font-size:92.0%;letter-spacing:-0.96px">평</span></div>
<div class="t" style="left:1225.40px;top:579.32px;font-size:13px;color:#2e2e2e;">-</div>
<div class="t" style="left:1405.60px;top:579.32px;font-size:13px;color:#2e2e2e;">-</div>
<div class="t" style="left:1586.50px;top:579.32px;font-size:13px;color:#2e2e2e;">2006-11-30</div>
<svg class="abs" style="left:10px;top:615.66px" width="15" height="14.2" viewBox="0 0 15 14.2"><rect width="15" height="14.2" rx="3.3" fill="#7f70e4"/><path d="M3.3 7.2l3.1 3 5.4-5.9" fill="none" stroke="#fff" stroke-width="2.1" stroke-linecap="round" stroke-linejoin="round"/></svg>
<div class="t" style="left:43.60px;top:615.96px;font-size:13px;color:#2e2e2e;"><span style="font-size:92.0%;letter-spacing:-0.96px">가호</span> <span style="font-size:92.0%;letter-spacing:-0.96px">외교타운</span></div>
<div class="t" style="left:332.50px;top:615.96px;font-size:13px;color:#2e2e2e;"><span style="font-size:92.0%;letter-spacing:-0.96px">서울특별시</span> <span style="font-size:92.0%;letter-spacing:-0.96px">서초구</span> <span style="font-size:92.0%;letter-spacing:-0.96px">서초동</span> 1376-1</div>
<div class="t" style="left:530.00px;top:615.96px;font-size:13px;color:#2e2e2e;"><span style="font-size:92.0%;letter-spacing:-0.96px">오피스</span></div>
<div class="t" style="left:665.60px;top:615.96px;font-size:13px;color:#2e2e2e;">1996</div>
<div class="t" style="left:845.40px;top:615.96px;font-size:13px;color:#2e2e2e;">8,269.98<span style="font-size:92.0%;letter-spacing:-0.96px">평</span></div>
<div class="t" style="left:1044.60px;top:615.96px;font-size:13px;color:#2e2e2e;">-</div>
<div class="t" style="left:1225.40px;top:615.96px;font-size:13px;color:#2e2e2e;">-</div>
<div class="t" style="left:1405.60px;top:615.96px;font-size:13px;color:#2e2e2e;">-</div>
<div class="t" style="left:1586.50px;top:615.96px;font-size:13px;color:#2e2e2e;">-</div>
<svg class="abs" style="left:10px;top:652.30px" width="15" height="14.2" viewBox="0 0 15 14.2"><rect width="15" height="14.2" rx="3.3" fill="#7f70e4"/><path d="M3.3 7.2l3.1 3 5.4-5.9" fill="none" stroke="#fff" stroke-width="2.1" stroke-linecap="round" stroke-linejoin="round"/></svg>
<div class="t" style="left:43.60px;top:652.60px;font-size:13px;color:#2e2e2e;"><span style="font-size:92.0%;letter-spacing:-0.96px">감정평가사회관</span></div>
<div class="t" style="left:332.50px;top:652.60px;font-size:13px;color:#2e2e2e;"><span style="font-size:92.0%;letter-spacing:-0.96px">서울특별시</span> <span style="font-size:92.0%;letter-spacing:-0.96px">서초구</span> <span style="font-size:92.0%;letter-spacing:-0.96px">방배동</span> 1022-3</div>
<div class="t" style="left:530.00px;top:652.60px;font-size:13px;color:#2e2e2e;"><span style="font-size:92.0%;letter-spacing:-0.96px">오피스</span></div>
<div class="t" style="left:665.60px;top:652.60px;font-size:13px;color:#2e2e2e;">2019</div>
<div class="t" style="left:845.40px;top:652.60px;font-size:13px;color:#2e2e2e;">2,960.41<span style="font-size:92.0%;letter-spacing:-0.96px">평</span></div>
<div class="t" style="left:1044.60px;top:652.60px;font-size:13px;color:#2e2e2e;">-</div>
<div class="t" style="left:1225.40px;top:652.60px;font-size:13px;color:#2e2e2e;">-</div>
<div class="t" style="left:1405.60px;top:652.60px;font-size:13px;color:#2e2e2e;">-</div>
<div class="t" style="left:1586.50px;top:652.60px;font-size:13px;color:#2e2e2e;">-</div>
</div>
<div class="abs" style="left:1686.00px;top:455.50px;width:9.00px;height:568.50px;background:#f8f8fa;border-radius:0 0 5px 0"></div>
<div class="abs" style="left:1687.00px;top:456.50px;width:7.50px;height:86.50px;background:#d6d9df;border-radius:4px"></div>
<div class="abs" style="left:25.00px;top:1025.50px;width:1661.00px;height:8.50px;background:#f6f7f9;border-radius:4px"></div>
<div class="abs" style="left:25.50px;top:1026.00px;width:1317.50px;height:7.50px;background:#d6d9df;border-radius:4px"></div>
<svg class="abs" style="left:677px;top:1054.5px" width="12" height="11" viewBox="0 0 12 11" fill="none" stroke="#b9bcc3" stroke-width="1.2" stroke-linecap="round" stroke-linejoin="round"><path d="M5.5 1.3L1.8 5.5 5.5 9.7M10.3 1.3L6.6 5.5 10.3 9.7"/></svg>
<svg class="abs" style="left:703px;top:1054.5px" width="9" height="11" viewBox="0 0 9 11" fill="none" stroke="#b9bcc3" stroke-width="1.2" stroke-linecap="round" stroke-linejoin="round"><path d="M7.3 1.3L2.7 5.5 7.3 9.7"/></svg>
<div class="abs" style="left:724.60px;top:1051.40px;width:18.30px;height:18.30px;background:#7b6be2;border-radius:50%"></div>
<div class="t" style="left:724.60px;top:1055.20px;font-size:11.5px;font-weight:bold;color:#fff;width:18.3px;text-align:center">1</div>
<div class="t" style="left:743.80px;top:1054.80px;font-size:11.5px;color:#333;width:30px;text-align:center">2</div>
<div class="t" style="left:769.20px;top:1054.80px;font-size:11.5px;color:#333;width:30px;text-align:center">3</div>
<div class="t" style="left:794.20px;top:1054.80px;font-size:11.5px;color:#333;width:30px;text-align:center">4</div>
<div class="t" style="left:819.60px;top:1054.80px;font-size:11.5px;color:#333;width:30px;text-align:center">5</div>
<div class="t" style="left:844.60px;top:1054.80px;font-size:11.5px;color:#333;width:30px;text-align:center">6</div>
<div class="t" style="left:870.00px;top:1054.80px;font-size:11.5px;color:#333;width:30px;text-align:center">7</div>
<div class="t" style="left:895.20px;top:1054.80px;font-size:11.5px;color:#333;width:30px;text-align:center">8</div>
<div class="t" style="left:920.60px;top:1054.80px;font-size:11.5px;color:#333;width:30px;text-align:center">9</div>
<div class="t" style="left:946.00px;top:1054.80px;font-size:11.5px;color:#333;width:30px;text-align:center">10</div>
<div class="t" style="left:972.00px;top:1054.80px;font-size:10px;color:#555;width:20px;text-align:center">...</div>
<svg class="abs" style="left:1007.5px;top:1054.5px" width="9" height="11" viewBox="0 0 9 11" fill="none" stroke="#222" stroke-width="1.4" stroke-linecap="round" stroke-linejoin="round"><path d="M2 1.3L6.6 5.5 2 9.7"/></svg>
<svg class="abs" style="left:1031px;top:1054.5px" width="12" height="11" viewBox="0 0 12 11" fill="none" stroke="#222" stroke-width="1.4" stroke-linecap="round" stroke-linejoin="round"><path d="M1.7 1.3L5.4 5.5 1.7 9.7M6.5 1.3L10.2 5.5 6.5 9.7"/></svg>
<div class="t" style="left:1311.00px;top:1073.00px;font-size:15px;color:#222;">전체 1,205개</div>
<div class="abs" style="left:1415.00px;top:1061.00px;width:271.00px;height:41.00px;background:#f2f3f5;border-radius:8px"></div>
<div class="t" style="left:1415.00px;top:1073.00px;font-size:14px;color:#c5c8d0;width:271px;text-align:center"><span style="letter-spacing:-1.48px">선택한</span> <span style="letter-spacing:-1.48px">목록으로</span> <span style="letter-spacing:-1.48px">분석하기</span></div>
<svg class="abs" style="left:0;top:0" width="1720" height="300" viewBox="0 0 1720 300">
<rect x="443.9" y="63.9" width="153" height="56.2" rx="3" fill="none" stroke="#b1221a" stroke-width="5.8"/>
<path d="M521.5 119 C 522 140, 576 155, 646 157 C 705 158.5, 785 161, 847 186.5" fill="none" stroke="#b1221a" stroke-width="5.2"/>
<path d="M860.3 197 L858.4 173.4 L837 194.3 Z" fill="#b1221a"/>
</svg>
</body></html>
